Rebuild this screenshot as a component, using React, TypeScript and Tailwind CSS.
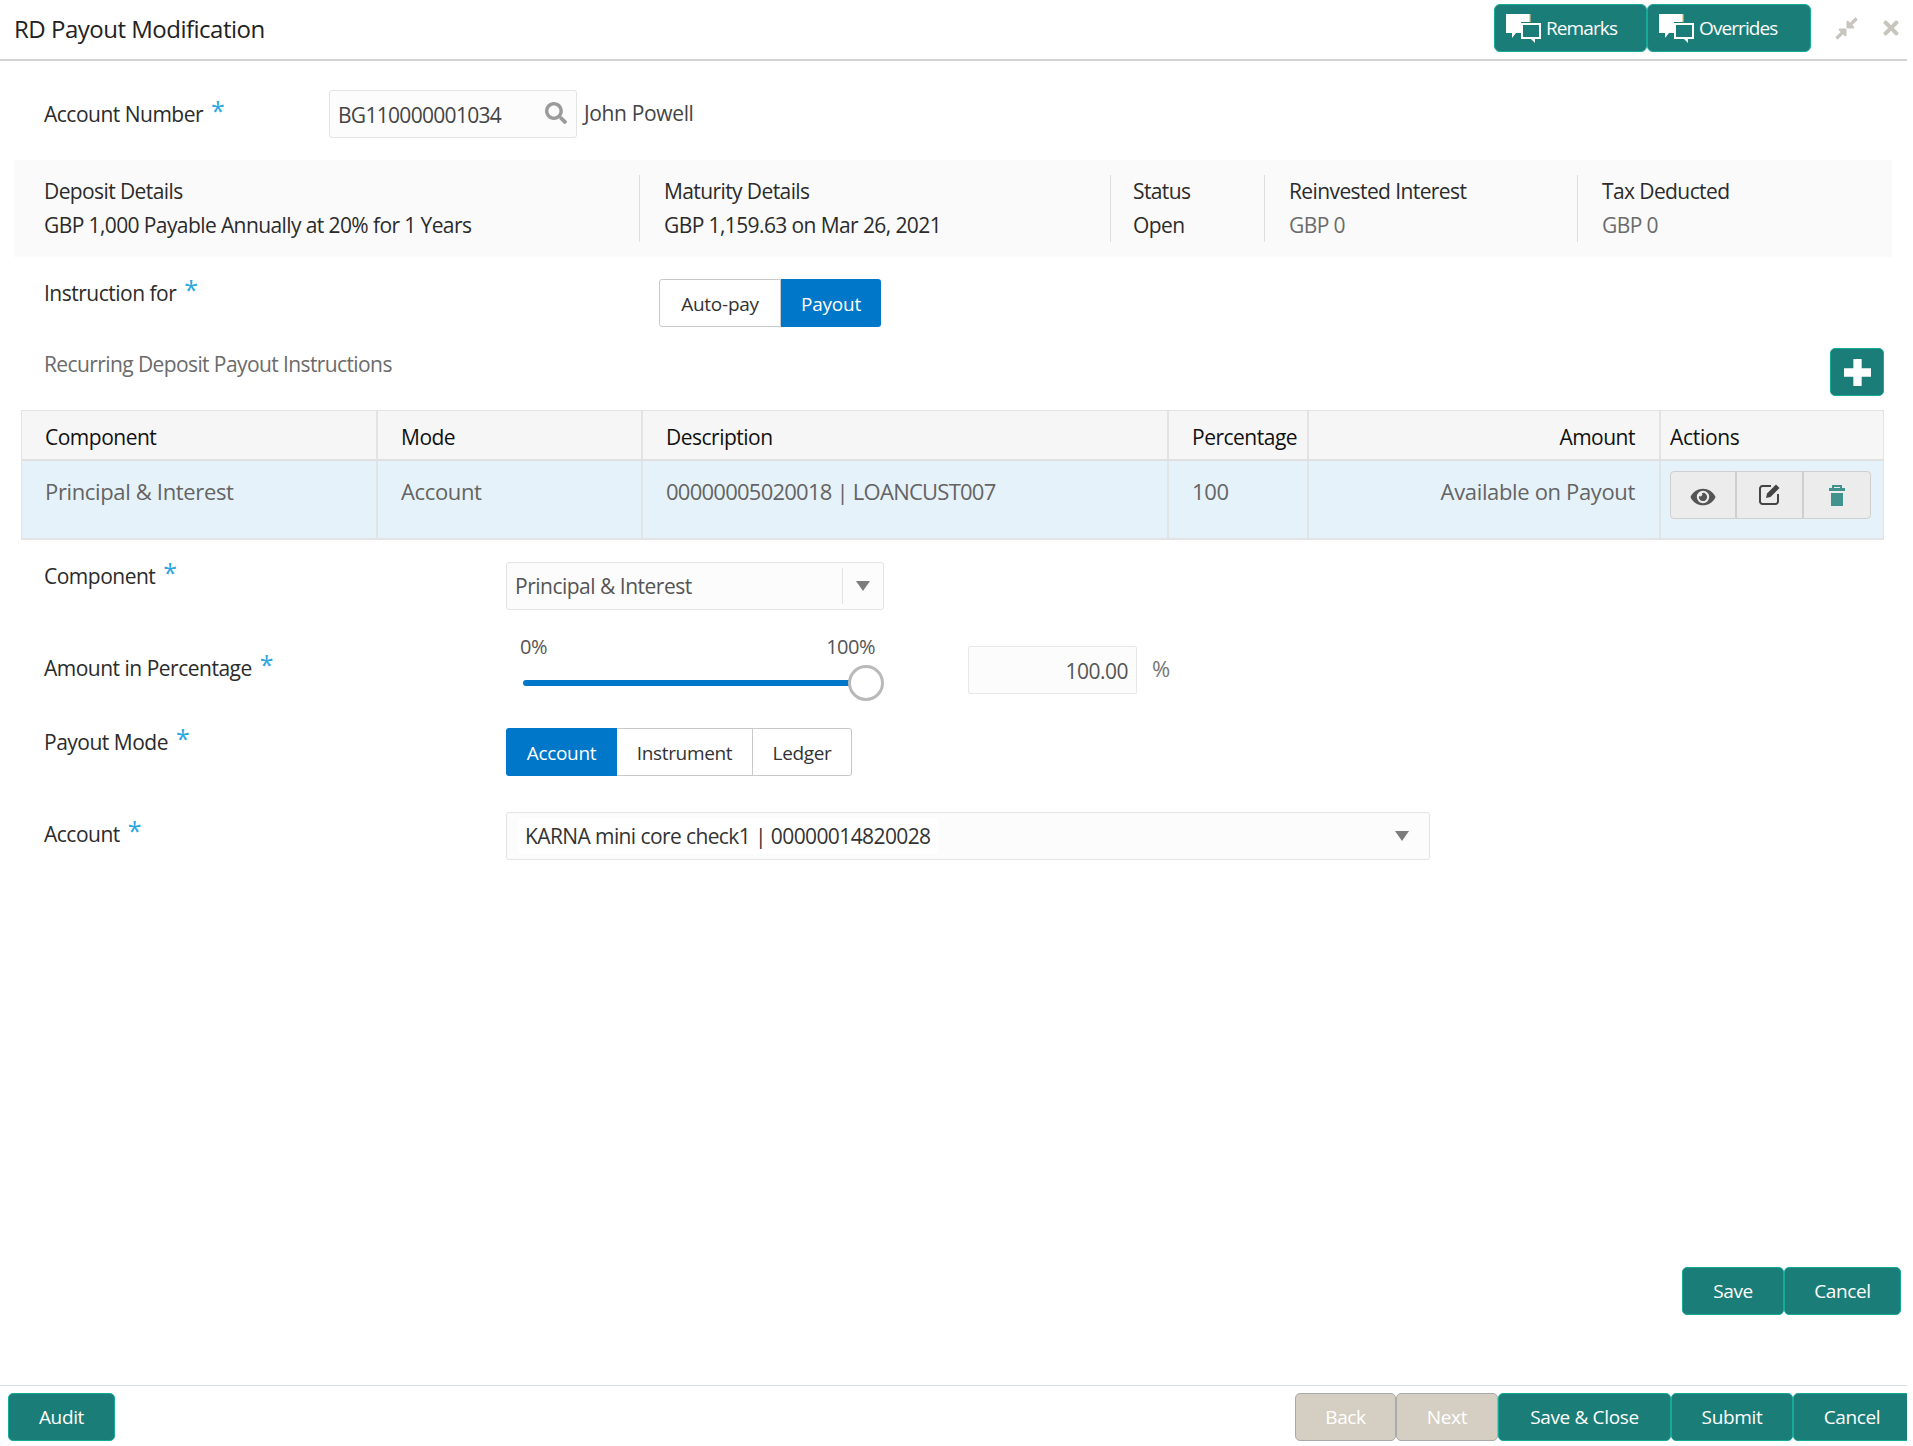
import type { ReactNode } from "react";
import { FaCompressAlt, FaEye, FaSearch, FaTimes } from "react-icons/fa";

const teal = "bg-[#1b7d78] border border-[#17a99a] text-white";
const grey = "bg-[#d5cfc3] border border-[#a9abab] text-white";

function ChatIcon() {
  return (
    <svg viewBox="0 0 35 29" className="w-[35px] h-[29px] shrink-0">
      <path d="M0 0h24v8H15v11H10l-4 5v-5H0z" fill="#fff" />
      <path d="M24 0v8" stroke="#d9bd7e" strokeWidth="1.2" />
      <path d="M15 9h20v16h-6v4l-4-4H15z" fill="#fff" />
      <rect x="17" y="11" width="16" height="12" fill="#1b7d78" />
    </svg>
  );
}

function Btn({ w, disabled, children }: { w: string; disabled?: boolean; children: ReactNode }) {
  return (
    <button className={`${w} h-[48px] shrink-0 rounded-[5px] text-[19px] tracking-[-0.35px] flex items-center justify-center ${disabled ? grey : teal}`}>
      {children}
    </button>
  );
}

function Req({ children, w }: { children: ReactNode; w: string }) {
  return (
    <div className={`${w} shrink-0 pl-[44px] text-[21px] text-[#2b2b2b] leading-[28px]`}>
      {children}
      <span className="text-[#2aa6e0] text-[25px] leading-none ml-[8px] relative -top-[2px]">*</span>
    </div>
  );
}

function Caret() {
  return (
    <svg viewBox="0 0 14 10" className="w-[14px] h-[10px]">
      <path d="M0 0h14L7 10z" fill="#7c7c7c" />
    </svg>
  );
}

function Stat({ title, value, w, pad, muted, last }: { title: string; value: string; w: string; pad: string; muted?: boolean; last?: boolean }) {
  return (
    <div className={`${w} ${pad} h-[67px] pb-[2px] flex flex-col justify-center gap-[6px] ${last ? "" : "border-r border-[#dedede]"}`}>
      <div className="text-[21px] leading-[28px] text-[#2b2b2b]">{title}</div>
      <div className={`text-[21px] leading-[28px] ${muted ? "text-[#6b6b6b]" : "text-[#2b2b2b]"}`}>{value}</div>
    </div>
  );
}

const columns = [
  { name: "Component", value: "Principal & Interest", cell: "w-[356px] pl-[23px]", track: "tracking-[-0.35px]" },
  { name: "Mode", value: "Account", cell: "w-[265px] pl-[23px]", track: "tracking-[-0.35px]" },
  { name: "Description", value: "00000005020018 | LOANCUST007", cell: "w-[526px] pl-[23px]", track: "tracking-[-0.75px]" },
  { name: "Percentage", value: "100", cell: "w-[140px] pl-[23px]", track: "tracking-[-0.35px]" },
  { name: "Amount", value: "Available on Payout", cell: "w-[352px] pr-[24px] text-right", track: "tracking-[-0.35px]" },
];

export default function App() {
  return (
    <div className="w-[1907px] h-[1446px] bg-white flex flex-col overflow-hidden font-['Open_Sans','Noto_Sans',sans-serif] tracking-[-0.5px]">
      {/* title bar */}
      <div className="h-[61px] shrink-0 border-b-2 border-[#d3d3d3] flex items-center pl-[14px] pb-[3px]">
        <h1 className="text-[24px] text-[#222] mt-[2px]">RD Payout Modification</h1>
        <div className="ml-auto flex items-center">
          <button className={`${teal} w-[153px] h-[48px] rounded-[6px] text-[19px] tracking-[-0.9px] flex items-center pl-[11px] gap-[5px]`}>
            <ChatIcon />
            Remarks
          </button>
          <button className={`${teal} w-[164px] h-[48px] rounded-[6px] text-[19px] tracking-[-0.9px] flex items-center pl-[11px] gap-[5px]`}>
            <ChatIcon />
            Overrides
          </button>
          <FaCompressAlt className="ml-[23px] w-[25px] h-[25px] text-[#c8c5bf]" />
          <FaTimes className="ml-[23px] mr-[7px] w-[18px] h-[22px] text-[#c8c5bf]" />
        </div>
      </div>

      {/* account */}
      <div className="flex items-center mt-[29px]">
        <Req w="w-[329px]">Account Number</Req>
        <div className="w-[248px] h-[48px] border border-[#e4e4e4] rounded-[3px] bg-[#fcfcfc] flex items-center pl-[8px] pr-[9px] text-[21px] text-[#444] tracking-[-0.7px]">
          <span className="mt-[4px]">BG110000001034</span>
          <FaSearch className="ml-auto w-[22px] h-[22px] text-[#9a9a9a] -mt-[2px]" />
        </div>
        <span className="ml-[7px] text-[21px] text-[#444] tracking-[-0.35px]">John Powell</span>
      </div>

      {/* deposit summary */}
      <div className="mt-[22px] ml-[14px] mr-[15px] h-[97px] shrink-0 bg-[#fafafa] flex items-center tracking-[-0.6px]">
        <div className="w-[626px] shrink-0 h-[67px] pb-[2px] flex flex-col justify-center gap-[6px] pl-[30px] border-r border-[#dedede]">
          <div className="text-[21px] leading-[28px] text-[#2b2b2b]">Deposit Details</div>
          <div className="text-[21px] leading-[28px] text-[#2b2b2b]">GBP 1,000 Payable Annually at 20% for 1 Years</div>
        </div>
        <Stat w="w-[471px] shrink-0" pad="pl-[24px]" title="Maturity Details" value="GBP 1,159.63 on Mar 26, 2021" />
        <Stat w="w-[154px] shrink-0" pad="pl-[22px]" title="Status" value="Open" />
        <Stat w="w-[313px] shrink-0" pad="pl-[24px]" title="Reinvested Interest" value="GBP 0" muted />
        <Stat w="flex-1" pad="pl-[24px]" title="Tax Deducted" value="GBP 0" muted last />
      </div>

      {/* instruction */}
      <div className="flex mt-[22px]">
        <Req w="w-[659px]">Instruction for</Req>
        <div className="flex h-[48px] text-[19px] tracking-[-0.25px]">
          <div className="w-[122px] pt-[2px] border border-[#c9c9c9] rounded-l-[3px] flex items-center justify-center text-[#333]">Auto-pay</div>
          <div className="w-[100px] pt-[2px] bg-[#0077c8] rounded-r-[3px] flex items-center justify-center text-white">Payout</div>
        </div>
      </div>

      <div className="flex justify-between items-start mt-[21px] pl-[44px] pr-[23px]">
        <div className="text-[21px] leading-[28px] text-[#6b6b6b] mt-[2px] tracking-[-0.6px]">Recurring Deposit Payout Instructions</div>
        <button className="w-[54px] h-[48px] rounded-[5px] bg-[#1b7d78] border border-[#17a99a] flex items-center justify-center">
          <svg viewBox="0 0 26 26" className="w-[27px] h-[27px]">
            <path d="M9 0h8v9h9v8h-9v9H9v-9H0V9h9z" fill="#fff" />
          </svg>
        </button>
      </div>

      {/* instructions table */}
      <div className="mt-[14px] ml-[21px] mr-[23px] shrink-0 border border-[#e3e3e3] border-b-2">
        <div className="flex h-[50px] bg-[#f6f6f6] border-b-2 border-[#e0e0e0]">
          {columns.map((c) => (
            <div key={c.name} className={`${c.cell} shrink-0 h-full pt-[5px] flex items-center border-r-2 border-[#e3e3e3] text-[21px] font-medium text-[#111] ${c.name === "Amount" ? "justify-end" : ""}`}>
              {c.name}
            </div>
          ))}
          <div className="flex-1 pt-[5px] flex items-center pl-[9px] text-[21px] font-medium text-[#111] tracking-[-0.3px]">Actions</div>
        </div>
        <div className="flex h-[77px] bg-[#e6f2f9]">
          {columns.map((c) => (
            <div key={c.name} className={`${c.cell} ${c.track} shrink-0 h-full pt-[14px] border-r-2 border-[#e0e4e6] text-[22px] font-medium text-[#646464]`}>
              {c.value}
            </div>
          ))}
          <div className="flex-1 pl-[9px] pt-[10px] flex items-start">
            <div className="w-[66px] h-[48px] bg-[#ececec] border border-[#cfcfcf] rounded-l-[4px] flex items-center justify-center">
              <FaEye className="w-[28px] h-[22px] text-[#555] mt-[4px]" />
            </div>
            <div className="w-[67px] h-[48px] bg-[#ececec] border border-[#cfcfcf] flex items-center justify-center">
              <svg viewBox="0 0 22 22" className="w-[22px] h-[22px] -mt-[3px]">
                <path d="M12 3H3.5A2.5 2.5 0 0 0 1 5.500V18.500A2.500 2.500 0 0 0 3.500 21H16.500A2.500 2.500 0 0 0 19 18.500V11" fill="none" stroke="#444" strokeWidth="2" />
                <path d="M7 15l1-4.500L17 1.500l3.500 3.500-9 9z" fill="#444" />
              </svg>
            </div>
            <div className="w-[68px] h-[48px] bg-[#ececec] border border-[#cfcfcf] rounded-r-[4px] flex items-center justify-center">
              <svg viewBox="0 0 16 21" className="w-[16px] h-[21px]">
                <path d="M3 0h10v3h3v3H0V3h3zM5 2v1h6V2zM2 8h12v13H2z" fill="#42928d" fillRule="evenodd" />
              </svg>
            </div>
          </div>
        </div>
      </div>

      {/* edit form */}
      <div className="flex mt-[22px]">
        <Req w="w-[506px]">Component</Req>
        <div className="w-[378px] h-[48px] border border-[#e4e4e4] rounded-[3px] bg-[#fcfcfc] flex items-center pl-[8px] text-[21px] text-[#555]">
          <span className="mt-[2px]">Principal & Interest</span>
          <div className="ml-auto w-[41px] h-[36px] border-l border-[#e4e4e4] flex items-center justify-center">
            <Caret />
          </div>
        </div>
      </div>

      <div className="flex mt-[22px]">
        <div className="pt-[22px]">
          <Req w="w-[506px]">Amount in Percentage</Req>
        </div>
        <div className="w-[378px] h-[70px] pl-[14px] pr-[9px] pt-[1px] flex flex-col">
          <div className="flex justify-between text-[20px] leading-[28px] text-[#555]">
            <span>0%</span>
            <span>100%</span>
          </div>
          <div className="flex items-center mt-[4px] pl-[3px] -mr-[9px]">
            <div className="flex-1 h-[6px] rounded-l-full bg-[#0077c8]" />
            <div className="w-[36px] h-[36px] rounded-full border-[3px] border-[#b9b9b9] bg-white -ml-px" />
          </div>
        </div>
        <div className="ml-[84px] mt-[14px] w-[169px] h-[48px] border border-[#e8e8e8] bg-[#fcfcfc] rounded-[2px] flex items-center justify-end pr-[8px] pt-[3px] text-[21px] text-[#555]">
          100.00
        </div>
        <span className="ml-[15px] mt-[22px] text-[22px] leading-[28px] text-[#777]">%</span>
      </div>

      <div className="flex mt-[26px]">
        <Req w="w-[506px]">Payout Mode</Req>
        <div className="flex h-[48px] text-[19px] tracking-[-0.35px]">
          <div className="w-[111px] pt-[2px] bg-[#0077c8] rounded-l-[3px] flex items-center justify-center text-white">Account</div>
          <div className="w-[136px] pt-[2px] border border-[#c9c9c9] border-l-0 flex items-center justify-center text-[#333]">Instrument</div>
          <div className="w-[99px] pt-[2px] border border-[#c9c9c9] border-l-0 rounded-r-[3px] flex items-center justify-center text-[#333]">Ledger</div>
        </div>
      </div>

      <div className="flex mt-[36px]">
        <div className="pt-[8px]">
          <Req w="w-[506px]">Account</Req>
        </div>
        <div className="w-[924px] h-[48px] border border-[#e4e4e4] rounded-[3px] bg-[#fcfcfc] flex items-center pl-[11px] pr-[20px] text-[21px] text-[#333] tracking-[-0.6px]">
          <span className="bg-white px-[7px] py-[4px] leading-[28px]">KARNA mini core check1 | 00000014820028</span>
          <div className="ml-auto">
            <Caret />
          </div>
        </div>
      </div>

      {/* row actions */}
      <div className="mt-auto flex justify-end pr-[6px]">
        <Btn w="w-[102px]">Save</Btn>
        <Btn w="w-[117px]">Cancel</Btn>
      </div>

      {/* footer */}
      <div className="mt-[70px] h-[61px] shrink-0 border-t border-[#d8dde2] flex items-start pt-[7px] pl-[8px]">
        <Btn w="w-[107px]">Audit</Btn>
        <div className="ml-auto -mr-[4px] flex">
          <Btn w="w-[101px]" disabled>Back</Btn>
          <Btn w="w-[102px]" disabled>Next</Btn>
          <Btn w="w-[173px]">Save & Close</Btn>
          <Btn w="w-[122px]">Submit</Btn>
          <Btn w="w-[118px]">Cancel</Btn>
        </div>
      </div>
    </div>
  );
}
